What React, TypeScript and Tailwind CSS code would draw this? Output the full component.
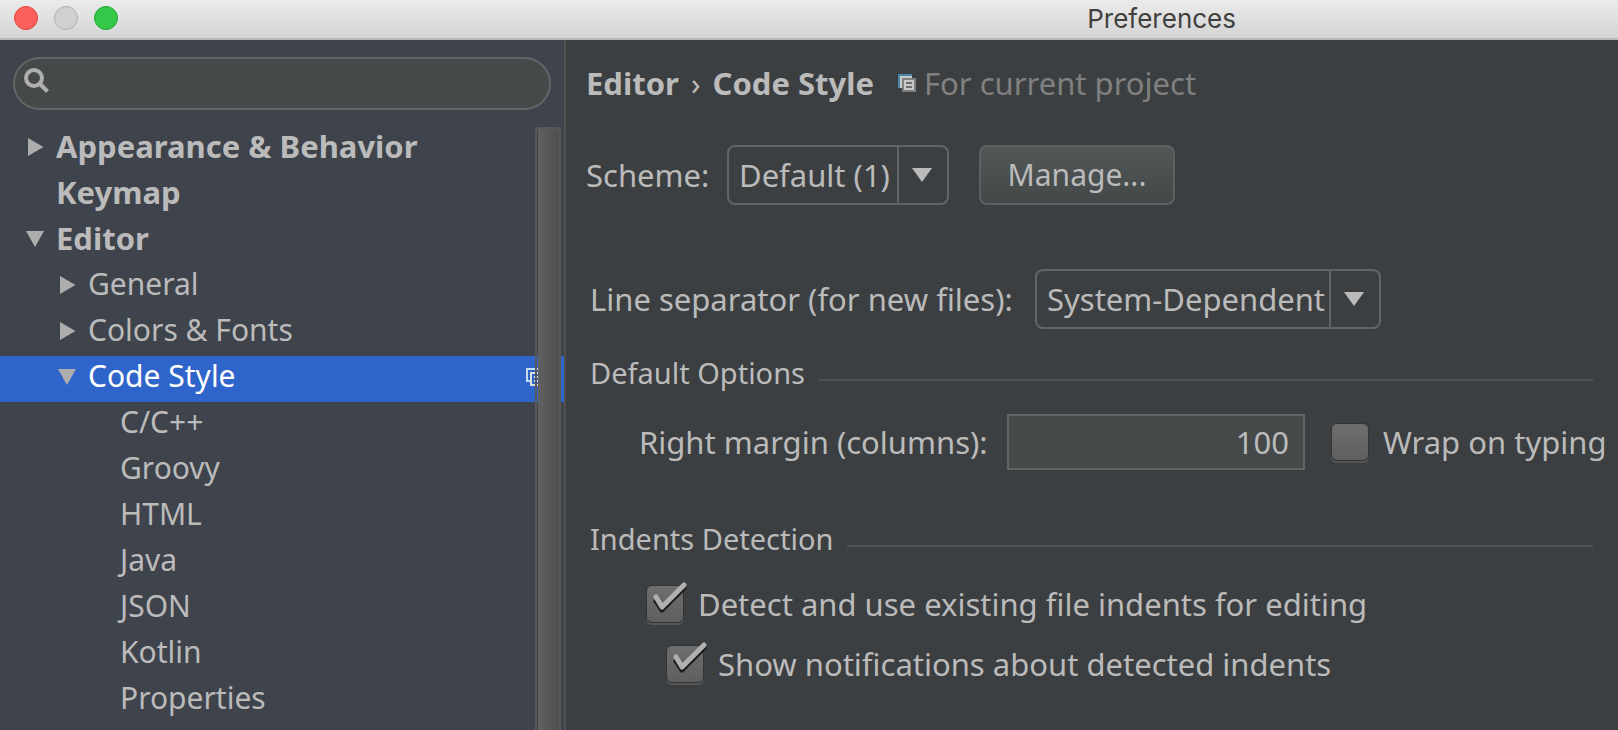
import { useState } from "react";
import type { ReactNode } from "react";

type TreeItem = {
  label: string;
  level: 0 | 1 | 2;
  state?: "open" | "closed";
};

const items: TreeItem[] = [
  { label: "Appearance & Behavior", level: 0, state: "closed" },
  { label: "Keymap", level: 0 },
  { label: "Editor", level: 0, state: "open" },
  { label: "General", level: 1, state: "closed" },
  { label: "Colors & Fonts", level: 1, state: "closed" },
  { label: "Code Style", level: 1, state: "open" },
  { label: "C/C++", level: 2 },
  { label: "Groovy", level: 2 },
  { label: "HTML", level: 2 },
  { label: "Java", level: 2 },
  { label: "JSON", level: 2 },
  { label: "Kotlin", level: 2 },
  { label: "Properties", level: 2 },
];

const indent = {
  0: "pl-[26px] text-[31px] font-bold",
  1: "pl-[58px] text-[30px]",
  2: "pl-[90px] text-[30px]",
};

function Disclosure({ state }: { state?: "open" | "closed" }) {
  return (
    <svg viewBox="0 0 18 18" className="size-[18px] shrink-0" aria-hidden="true">
      {state === "closed" && <path d="M2 0 L17.5 9 L2 18 Z" fill="#adadad" />}
      {state === "open" && <path d="M0 1 H18 L9 17 Z" fill="#adadad" />}
    </svg>
  );
}

function ProjectIcon({ selected = false }: { selected?: boolean }) {
  if (selected) {
    return (
      <svg viewBox="0 0 18 18" className="size-[18px] shrink-0" aria-hidden="true">
        <path d="M4 13 H1 V1 H14" fill="none" stroke="#c5dcf0" strokeWidth="2" />
        <path d="M18 17 H5 V5 H18" fill="none" stroke="#dcdcdc" strokeWidth="2" />
        <path d="M8 9 H18 M8 13 H18" stroke="#dcdcdc" strokeWidth="2" />
      </svg>
    );
  }
  return (
    <svg viewBox="0 0 18 18" className="size-[18px] shrink-0" aria-hidden="true">
      <rect width="14" height="14" fill="#4c87a8" />
      <rect x="2" y="2" width="12" height="12" fill="#c9c9c9" />
      <rect x="4" y="4" width="14" height="14" fill="#7f7f7f" />
      <rect x="6" y="6" width="10" height="10" fill="#c9c9c9" />
      <path d="M8 9 H14 M8 13 H14" stroke="#6e6e6e" strokeWidth="2" />
    </svg>
  );
}

function Dropdown({ id, options, width }: { id: string; options: string[]; width: string }) {
  return (
    <div className={`relative flex h-[60px] rounded-lg border-2 border-[#646464] ${width}`}>
      <select
        id={id}
        className="w-full appearance-none bg-transparent pl-[10px] outline-none"
      >
        {options.map((o) => (
          <option key={o}>{o}</option>
        ))}
      </select>
      <span className="pointer-events-none absolute inset-y-0 right-0 flex w-[50px] items-center justify-center border-l-2 border-[#646464] pr-[2px]">
        <svg viewBox="0 0 20 14" className="h-[14px] w-5" aria-hidden="true">
          <path d="M0 0 H20 L10 14 Z" fill="#bbbbbb" />
        </svg>
      </span>
    </div>
  );
}

function Checkbox({ label, initial = false }: { label: string; initial?: boolean }) {
  const [checked, setChecked] = useState(initial);
  return (
    <label className="flex h-10 items-center gap-[14px] whitespace-nowrap">
      <span className="relative flex size-[38px] shrink-0">
        <input
          type="checkbox"
          checked={checked}
          onChange={(e) => setChecked(e.target.checked)}
          className="size-full appearance-none rounded-md border border-[#343434] bg-linear-to-b from-[#6e6e6e] to-[#5f5f5f] shadow-[0_2px_0_#545657]"
        />
        {checked && (
          <svg
            viewBox="0 0 44 44"
            className="pointer-events-none absolute -top-1 left-0 size-11"
            fill="none"
            strokeLinecap="round"
            strokeLinejoin="round"
            strokeWidth="5"
            aria-hidden="true"
          >
            <path d="M10 20 L16 29 L38 7" stroke="#1e1e1e" />
            <path d="M10 16 L16 26 L38 4" stroke="#b0b0b0" />
          </svg>
        )}
      </span>
      {label}
    </label>
  );
}

function SectionTitle({ children }: { children: ReactNode }) {
  return (
    <div className="flex h-9 items-center gap-[14px] pl-1 pr-[25px]">
      <h2 className="text-[29px] leading-9 whitespace-nowrap">{children}</h2>
      <span className="mt-[14px] h-[2px] flex-1 bg-[#515151]" />
    </div>
  );
}

export default function App() {
  const [selected, setSelected] = useState("Code Style");
  return (
    <div className="flex min-h-screen flex-col overflow-hidden bg-[#3c3f41] font-['Noto_Sans',sans-serif] text-[31px] leading-[44px] text-[#bbbbbb]">
      <header className="flex h-10 items-center border-b-2 border-[#b9b9b9] bg-linear-to-b from-[#ebebeb] to-[#d4d4d4] pl-[14px]">
        <div className="flex gap-4 pb-[2px]">
          <button aria-label="Close" className="size-6 rounded-full border border-[#e2463f] bg-[#fc605c]" />
          <button aria-label="Minimize" className="size-6 rounded-full border border-[#b1b1b1] bg-[#d0d0d0]" />
          <button aria-label="Zoom" className="size-6 rounded-full border border-[#20a832] bg-[#34c84a]" />
        </div>
        <h1 className="mr-[382px] ml-auto font-['Inter',sans-serif] text-[26px] leading-8 text-[#404040]">Preferences</h1>
      </header>

      <div className="flex flex-1">
        <aside className="relative flex w-[566px] shrink-0 flex-col border-r-2 border-[#515151] bg-[#3f434c] pt-[17px]">
          <div className="mx-[13px] flex h-[53px] rounded-full border-2 border-[#646464] bg-[#45494a] pl-[9px]">
            <svg viewBox="0 0 26 26" className="mt-[9px] size-[26px] shrink-0" fill="none" stroke="#afafaf" strokeWidth="4" aria-hidden="true">
              <circle cx="10" cy="10" r="8" />
              <path d="M15.5 15.5 L23.5 23.5" />
            </svg>
            <input type="text" aria-label="Search settings" className="min-w-0 flex-1 bg-transparent px-3 outline-none" />
          </div>

          <ul className="mt-4">
            {items.map((item) => {
              const active = item.label === selected;
              return (
                <li key={item.label}>
                  <button
                    onClick={() => setSelected(item.label)}
                    className={`flex h-[46px] w-full items-center gap-3 pr-5 pb-1 text-left ${indent[item.level]} ${active ? "bg-[#2f65ca] text-white" : ""}`}
                  >
                    <Disclosure state={item.state} />
                    <span className="flex-1 pb-[2px] leading-10">{item.label}</span>
                    {active && <ProjectIcon selected />}
                  </button>
                </li>
              );
            })}
          </ul>

          <div className="absolute top-[87px] right-[3px] bottom-0 w-[26px] rounded-t border-2 border-b-0 border-[#585858] pl-px">
            <div className="h-full bg-linear-to-r from-[#616161] to-[#4f4f4f]" />
          </div>
        </aside>

        <main className="flex-1 pt-[21px] pl-5">
          <div className="flex h-11 items-center">
            <span className="font-bold">Editor</span>
            <span className="mx-3">›</span>
            <span className="font-bold">Code Style</span>
            <span className="ml-6 flex items-center gap-2 text-[#808080]">
              <ProjectIcon />
              For current project
            </span>
          </div>

          <div className="mt-10 flex items-center">
            <label htmlFor="scheme" className="w-[141px]">Scheme:</label>
            <Dropdown id="scheme" options={["Default (1)", "Project"]} width="w-[222px]" />
            <button className="ml-[30px] h-[60px] w-[196px] rounded-lg border-2 border-[#5c6060] bg-linear-to-b from-[#525758] to-[#434849] text-[30px]">
              Manage...
            </button>
          </div>

          <div className="mt-16 flex items-center pl-1">
            <label htmlFor="separator" className="w-[445px] whitespace-nowrap">Line separator (for new files):</label>
            <Dropdown id="separator" options={["System-Dependent", "Unix and OS X (\\n)", "Windows (\\r\\n)"]} width="w-[346px]" />
          </div>

          <div className="mt-[26px]">
            <SectionTitle>Default Options</SectionTitle>
          </div>
          <div className="mt-[23px] flex items-center pl-[53px]">
            <label htmlFor="margin" className="w-[368px] whitespace-nowrap">Right margin (columns):</label>
            <input
              id="margin"
              type="text"
              defaultValue="100"
              className="h-14 w-[298px] border-2 border-[#646464] bg-[#45494a] pr-[14px] text-right outline-none"
            />
            <div className="ml-[26px]">
              <Checkbox label="Wrap on typing" />
            </div>
          </div>

          <div className="mt-[51px]">
            <SectionTitle>Indents Detection</SectionTitle>
          </div>
          <div className="mt-[27px] flex flex-col gap-5 pl-[60px]">
            <Checkbox label="Detect and use existing file indents for editing" initial />
            <div className="pl-5">
              <Checkbox label="Show notifications about detected indents" initial />
            </div>
          </div>
        </main>
      </div>
    </div>
  );
}
